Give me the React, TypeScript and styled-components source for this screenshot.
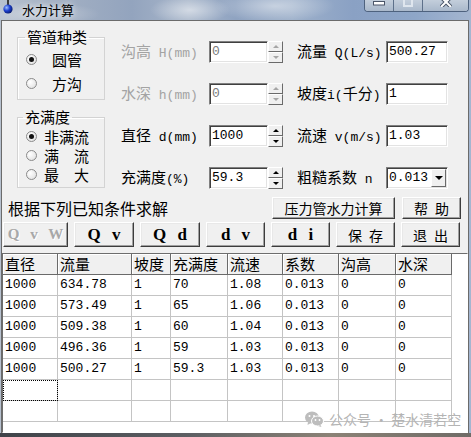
import React from "react";
import styled, { createGlobalStyle } from "styled-components";

const CJK = `"Noto Sans CJK SC", "Noto Sans", sans-serif`;
const MONO = `"Liberation Mono", "Noto Sans CJK SC", monospace`;
const SERIF = `"Liberation Serif", "Noto Sans CJK SC", serif`;

const GlobalStyle = createGlobalStyle`
  html, body { margin: 0; padding: 0; background: #8fa2bd; }
  body { font-family: ${CJK}; color: #000; }
`;

// ---- window frame ----

const Win = styled.div`
  width: 471px;
  height: 437px;
  overflow: hidden;
  display: flex;
  flex-direction: column;
  background: linear-gradient(90deg, #b7c1cf 0%, #a3b0c3 12%, #93a4be 28%, #a8b6ca 40%, #8fa3c1 50%, #9db0ca 62%, #8aa1c4 75%, #8ea6c8 88%, #a4b6d0 100%);
`;

const TitleBar = styled.div`
  height: 20px;
  flex: none;
  display: flex;
  align-items: flex-start;
  background:
    radial-gradient(ellipse 40px 14px at 190px 10px, rgba(255, 255, 255, 0.5), transparent),
    radial-gradient(ellipse 60px 16px at 275px 6px, rgba(255, 255, 255, 0.45), transparent),
    radial-gradient(ellipse 60px 12px at 40px 14px, rgba(255, 255, 255, 0.35), transparent);
`;

const TitleIcon = styled.svg`
  margin: 0 0 0 2px;
  flex: none;
`;

const TitleText = styled.div`
  margin: 1px 0 0 8px;
  font-size: 13px;
  line-height: 17px;
  text-shadow: 0 0 6px rgba(255, 255, 255, 0.9);
`;

const Controls = styled.div`
  margin-left: auto;
  margin-right: 2px;
  display: flex;
  height: 11px;
  border: 1px solid #4e627e;
  border-top: none;
  border-radius: 0 0 4px 4px;
  overflow: hidden;
  box-shadow: inset 0 -1px rgba(255, 255, 255, 0.6);
`;

const CtlBtn = styled.div<{ $w: number }>`
  width: ${(p) => p.$w}px;
  display: flex;
  align-items: flex-start;
  justify-content: center;
  background: linear-gradient(#c3cedb, #a9b8cb);
  & + & { border-left: 1px solid #5d708a; }
`;

const Client = styled.div`
  margin-left: 1px;
  width: 468px;
  height: 413px;
  flex: none;
  box-sizing: border-box;
  border: 1px solid #6b6b6b;
  border-bottom: none;
  background: #f0f0f0;
  display: flex;
  flex-direction: column;
`;

const BottomFrame = styled.div`
  flex: 1;
  background: linear-gradient(90deg, #3f4349, #5d5f63 40%, #8b8276 70%, #6f6b66);
`;

// ---- top section ----

const Top = styled.div`
  display: flex;
  align-items: flex-start;
  padding: 6px 0 0 15px;
`;

const LeftCol = styled.div`
  width: 88px;
  display: flex;
  flex-direction: column;
  gap: 7px;
`;

const Group = styled.fieldset<{ $h: number }>`
  margin: 0;
  padding: 0;
  min-width: 0;
  height: ${(p) => p.$h}px;
  box-sizing: border-box;
  border: 1px solid #d3d3d3;
  box-shadow: inset 1px 1px #fff;
`;

const Legend = styled.legend<{ $x: number }>`
  margin-left: ${(p) => p.$x}px;
  padding: 0 2px;
  font-size: 15px;
  line-height: 20px;
`;

const RadioRow = styled.div<{ $h: number; $gap: number }>`
  height: ${(p) => p.$h}px;
  display: flex;
  align-items: center;
  padding-left: 8px;
  gap: ${(p) => p.$gap}px;
  font-size: 15px;
`;

const Dot = styled.span<{ $on?: boolean }>`
  width: 11px;
  height: 11px;
  flex: none;
  border-radius: 50%;
  box-sizing: border-box;
  border: 1px solid #8a8a8a;
  background: radial-gradient(circle at 35% 35%, #ffffff, #dcdcdc);
  position: relative;
  &::after {
    content: "";
    display: ${(p) => (p.$on ? "block" : "none")};
    position: absolute;
    left: 2px;
    top: 2px;
    width: 5px;
    height: 5px;
    border-radius: 50%;
    background: #111;
  }
`;

const Fields = styled.div`
  margin: 14px 0 0 16px;
  display: grid;
  grid-template-columns: 88px 88px 89px 62px;
  grid-auto-rows: 22px;
  row-gap: 20px;
  align-items: center;
`;

const Label = styled.div<{ $off?: boolean }>`
  font-size: 15px;
  line-height: 22px;
  white-space: pre;
  color: ${(p) => (p.$off ? "#a3a3a3" : "#000")};
`;

const M = styled.span`
  font-family: ${MONO};
  font-size: 13px;
`;

const Sunken = styled.div<{ $w: number }>`
  width: ${(p) => p.$w}px;
  height: 22px;
  box-sizing: border-box;
  background: #fff;
  border: 1px solid;
  border-color: #808080 #fff #fff #808080;
  box-shadow: inset 1px 1px #404040, inset -1px -1px #e3e3e3;
  display: flex;
  align-items: center;
`;

const Value = styled.span<{ $off?: boolean }>`
  flex: 1;
  padding-left: 2px;
  font-family: ${MONO};
  font-size: 13px;
  line-height: 18px;
  color: ${(p) => (p.$off ? "#7a7a7a" : "#000")};
`;

const SpinBox = styled.div`
  display: flex;
`;

const Spin = styled.div`
  width: 15px;
  height: 22px;
  display: flex;
  flex-direction: column;
`;

const SpinHalf = styled.div<{ $off?: boolean; $down?: boolean }>`
  flex: 1;
  box-sizing: border-box;
  background: #f0f0f0;
  border: 1px solid;
  border-color: #fff #6a6a6a #6a6a6a #fff;
  display: flex;
  align-items: center;
  justify-content: center;
  &::before {
    content: "";
    border-left: 3px solid transparent;
    border-right: 3px solid transparent;
    ${(p) => (p.$down ? "border-top" : "border-bottom")}: 3px solid ${(p) => (p.$off ? "#a6a6a6" : "#000")};
  }
`;

const DropBtn = styled.div`
  width: 15px;
  height: 18px;
  margin-right: 1px;
  box-sizing: border-box;
  background: #f0f0f0;
  border: 1px solid;
  border-color: #fff #6a6a6a #6a6a6a #fff;
  display: flex;
  align-items: center;
  justify-content: center;
  &::before {
    content: "";
    border-left: 4px solid transparent;
    border-right: 4px solid transparent;
    border-top: 4px solid #000;
  }
`;

// ---- buttons ----

const ActionRow = styled.div`
  margin-top: 8px;
  height: 22px;
  display: flex;
  align-items: center;
  gap: 7px;
  padding: 0 7px 0 6px;
`;

const Hint = styled.div`
  flex: 1;
  font-size: 16px;
  line-height: 22px;
`;

const SolveRow = styled.div`
  margin-top: 3px;
  height: 25px;
  display: flex;
  gap: 6px;
  padding-left: 1px;
`;

const Btn = styled.div<{ $w: number; $bold?: boolean; $off?: boolean }>`
  width: ${(p) => p.$w}px;
  height: 100%;
  flex: none;
  box-sizing: border-box;
  background: #f0f0f0;
  border: 1px solid;
  border-color: #fff #3c3c3c #3c3c3c #fff;
  box-shadow: inset -1px -1px #a0a0a0, inset 1px 1px #e8e8e8;
  display: flex;
  align-items: center;
  justify-content: center;
  white-space: pre;
  font-family: ${(p) => (p.$bold ? SERIF : CJK)};
  font-weight: ${(p) => (p.$bold ? 700 : 400)};
  font-size: ${(p) => (p.$bold ? (p.$off ? 15 : 17) : 14)}px;
  word-spacing: ${(p) => (p.$bold ? (p.$off ? 7 : 7) : 4)}px;
  color: ${(p) => (p.$off ? "#a8a8a8" : "#000")};
  text-shadow: ${(p) => (p.$off ? "1px 1px #fff" : "none")};
`;

// ---- data grid ----

const Grid = styled.div`
  margin-top: 6px;
  flex: 1;
  position: relative;
  box-sizing: border-box;
  background: #fff;
  border: 1px solid;
  border-color: #6d6d6d #fff #fff #6d6d6d;
  overflow: hidden;
`;

const Cells = styled.div`
  display: grid;
  grid-template-columns: 55px 74px 39px 57px 55px 56px 57px 56px;
  grid-auto-rows: 21px;
  width: 449px;
`;

const Head = styled.div`
  box-sizing: border-box;
  background: #f0f0f0;
  border-right: 1px solid #6a6a6a;
  border-bottom: 1px solid #6a6a6a;
  box-shadow: inset 1px 1px #fff;
  padding-left: 2px;
  font-size: 15px;
  line-height: 20px;
  white-space: nowrap;
  overflow: hidden;
`;

const Cell = styled.div<{ $focus?: boolean }>`
  box-sizing: border-box;
  border-right: 1px solid #c4c4c4;
  border-bottom: 1px solid #c4c4c4;
  padding-left: 2px;
  font-family: ${MONO};
  font-size: 13px;
  line-height: 20px;
  outline: ${(p) => (p.$focus ? "1px dotted #000" : "none")};
  outline-offset: -1px;
`;

const Watermark = styled.div`
  position: absolute;
  left: 302px;
  top: 157px;
  display: flex;
  align-items: center;
  gap: 5px;
  color: #b4b4b4;
  font-size: 14px;
  line-height: 16px;
  white-space: pre;
`;

const heads = ["直径", "流量", "坡度", "充满度", "流速", "系数", "沟高", "水深"];
const rows = [
  ["1000", "634.78", "1", "70", "1.08", "0.013", "0", "0"],
  ["1000", "573.49", "1", "65", "1.06", "0.013", "0", "0"],
  ["1000", "509.38", "1", "60", "1.04", "0.013", "0", "0"],
  ["1000", "496.36", "1", "59", "1.03", "0.013", "0", "0"],
  ["1000", "500.27", "1", "59.3", "1.03", "0.013", "0", "0"],
];

const SpinInput = ({ value, off }: { value: string; off?: boolean }) => (
  <SpinBox>
    <Sunken $w={59}>
      <Value $off={off}>{value}</Value>
    </Sunken>
    <Spin>
      <SpinHalf $off={off} />
      <SpinHalf $off={off} $down />
    </Spin>
  </SpinBox>
);

export default function App() {
  return (
    <>
      <GlobalStyle />
      <Win>
        <TitleBar>
          <TitleIcon width="12" height="14" viewBox="0 0 12 14">
            <defs>
              <radialGradient id="ball" cx="0.35" cy="0.35" r="0.7">
                <stop offset="0" stopColor="#9fc0ff" />
                <stop offset="0.5" stopColor="#1c3fd0" />
                <stop offset="1" stopColor="#071a6a" />
              </radialGradient>
            </defs>
            <rect x="5" y="0" width="2" height="6" fill="#3a3a3a" />
            <circle cx="6" cy="9" r="4.6" fill="url(#ball)" />
          </TitleIcon>
          <TitleText>水力计算</TitleText>
          <Controls>
            <CtlBtn $w={28}>
              <svg width="12" height="6" viewBox="0 0 12 6">
                <rect x="0.5" y="1.5" width="11" height="3.5" fill="#fff" stroke="#4a5568" />
              </svg>
            </CtlBtn>
            <CtlBtn $w={28}>
              <svg width="10" height="7" viewBox="0 0 10 7">
                <rect x="1" y="-2" width="8" height="8" fill="none" stroke="#dfe6ee" strokeWidth="2" />
              </svg>
            </CtlBtn>
            <CtlBtn $w={45}>
              <svg width="12" height="7" viewBox="0 0 12 7">
                <path d="M1 -3 L11 7 M11 -3 L1 7" stroke="#4a5568" strokeWidth="4" />
                <path d="M1 -3 L11 7 M11 -3 L1 7" stroke="#fff" strokeWidth="2" />
              </svg>
            </CtlBtn>
          </Controls>
        </TitleBar>

        <Client>
          <Top>
            <LeftCol>
              <Group $h={73}>
                <Legend $x={7}>管道种类</Legend>
                <RadioRow $h={24} $gap={15}>
                  <Dot $on />
                  圆管
                </RadioRow>
                <RadioRow $h={24} $gap={15}>
                  <Dot />
                  方沟
                </RadioRow>
              </Group>
              <Group $h={81}>
                <Legend $x={5}>充满度</Legend>
                <RadioRow $h={19} $gap={7}>
                  <Dot $on />
                  非满流
                </RadioRow>
                <RadioRow $h={19} $gap={7}>
                  <Dot />
                  满　流
                </RadioRow>
                <RadioRow $h={19} $gap={7}>
                  <Dot />
                  最　大
                </RadioRow>
              </Group>
            </LeftCol>

            <Fields>
              <Label $off>沟高<M> H(mm)</M></Label>
              <SpinInput value="0" off />
              <Label>流量<M> Q(L/s)</M></Label>
              <Sunken $w={62}><Value>500.27</Value></Sunken>

              <Label $off>水深<M> h(mm)</M></Label>
              <SpinInput value="0" off />
              <Label>坡度<M>i(</M>千分<M>)</M></Label>
              <Sunken $w={62}><Value>1</Value></Sunken>

              <Label>直径<M> d(mm)</M></Label>
              <SpinInput value="1000" />
              <Label>流速<M> v(m/s)</M></Label>
              <Sunken $w={62}><Value>1.03</Value></Sunken>

              <Label>充满度<M>(%)</M></Label>
              <SpinInput value="59.3" />
              <Label>粗糙系数<M> n</M></Label>
              <Sunken $w={62}>
                <Value>0.013</Value>
                <DropBtn />
              </Sunken>
            </Fields>
          </Top>

          <ActionRow>
            <Hint>根据下列已知条件求解</Hint>
            <Btn $w={123}>压力管水力计算</Btn>
            <Btn $w={59}>帮 助</Btn>
          </ActionRow>

          <SolveRow>
            <Btn $w={65} $bold $off>Q v W</Btn>
            <Btn $w={60} $bold>Q v</Btn>
            <Btn $w={60} $bold>Q d</Btn>
            <Btn $w={59} $bold>d v</Btn>
            <Btn $w={59} $bold>d i</Btn>
            <Btn $w={59}>保 存</Btn>
            <Btn $w={59}>退 出</Btn>
          </SolveRow>

          <Grid>
            <Cells>
              {heads.map((h) => (
                <Head key={h}>{h}</Head>
              ))}
              {rows.map((r, i) =>
                r.map((v, j) => <Cell key={`${i}-${j}`}>{v}</Cell>)
              )}
              {[0, 1].map((i) =>
                heads.map((_, j) => <Cell key={`e${i}-${j}`} $focus={i === 0 && j === 0} />)
              )}
            </Cells>
            <Watermark>
              <svg width="19" height="16" viewBox="0 0 19 16">
                <ellipse cx="7" cy="6.5" rx="7" ry="6" fill="#bdbdbd" />
                <path d="M3 11 L2.5 14 L6 12 Z" fill="#bdbdbd" />
                <ellipse cx="12.5" cy="10" rx="6" ry="5" fill="#bdbdbd" stroke="#fff" strokeWidth="1" />
                <path d="M15.5 14 L16.5 16 L13 15 Z" fill="#bdbdbd" />
                <circle cx="4.5" cy="5" r="1" fill="#fff" />
                <circle cx="9" cy="5" r="1" fill="#fff" />
                <circle cx="10.5" cy="9" r="0.9" fill="#fff" />
                <circle cx="14.5" cy="9" r="0.9" fill="#fff" />
              </svg>
              公众号 · 楚水清若空
            </Watermark>
          </Grid>
        </Client>
        <BottomFrame />
      </Win>
    </>
  );
}
